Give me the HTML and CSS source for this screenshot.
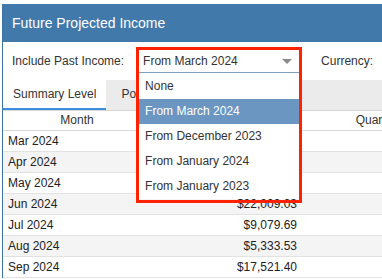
FILE: index.html
```html
<!DOCTYPE html>
<html>
<head>
<meta charset="utf-8">
<link rel="stylesheet" href="styles.css">
</head>
<body>
<div class="panel">
  <div class="panel-header">Future Projected Income</div>
  <div class="filters">
    <span class="label">Include Past Income:</span>
    <div class="picker">
      <div class="select-display">
        <span>From March 2024</span>
        <span class="caret"></span>
      </div>
      <ul class="dropdown">
        <li>None</li>
        <li class="selected">From March 2024</li>
        <li>From December 2023</li>
        <li>From January 2024</li>
        <li>From January 2023</li>
      </ul>
      <div class="annot"></div>
    </div>
    <span class="label currency">Currency:</span>
  </div>
  <div class="tabs">
    <div class="tab active">Summary Level</div>
    <div class="tab">Policy Level</div>
  </div>
  <table class="grid">
    <colgroup><col class="c1"><col class="c2"><col class="c3"></colgroup>
    <thead>
      <tr><th>Month</th><th></th><th>Quarter</th></tr>
    </thead>
    <tbody>
      <tr><td>Mar 2024</td><td class="num"></td><td></td></tr>
      <tr><td>Apr 2024</td><td class="num"></td><td></td></tr>
      <tr><td>May 2024</td><td class="num"></td><td></td></tr>
      <tr><td>Jun 2024</td><td class="num">$22,009.03</td><td></td></tr>
      <tr><td>Jul 2024</td><td class="num">$9,079.69</td><td></td></tr>
      <tr><td>Aug 2024</td><td class="num">$5,333.53</td><td></td></tr>
      <tr><td>Sep 2024</td><td class="num">$17,521.40</td><td></td></tr>
    </tbody>
  </table>
</div>
</body>
</html>
```
FILE: styles.css
```css
html, body {
  margin: 0;
  padding: 0;
  background: #fff;
  overflow: hidden;
}
body {
  padding: 4px 0 0 2px;
  font-family: "Liberation Sans", Arial, sans-serif;
  font-size: 12px;
  color: #333;
  width: 600px;
}
.panel {
  border-left: 1px solid #3f74a6;
}
.panel-header {
  background: #4179ab;
  color: #fff;
  font-size: 14px;
  height: 38px;
  line-height: 38px;
  padding-left: 9px;
}
.filters {
  display: flex;
  align-items: flex-start;
  height: 38px;
  padding: 8px 0 0 9px;
  box-sizing: border-box;
  white-space: nowrap;
}
.label {
  line-height: 22px;
  color: #333;
}
.currency {
  margin-left: 22px;
}
.picker {
  position: relative;
  flex: none;
  width: 160px;
  margin-left: 15px;
}
.select-display {
  display: flex;
  justify-content: space-between;
  align-items: center;
  height: 22px;
  line-height: 22px;
  padding: 0 7px 0 4px;
  border-bottom: 1px solid #7f9fc0;
  color: #333;
}
.caret {
  width: 0;
  height: 0;
  border-left: 5px solid transparent;
  border-right: 5px solid transparent;
  border-top: 5px solid #8a8a8a;
  margin-top: 1px;
}
.dropdown {
  position: absolute;
  top: 24px;
  left: 0;
  width: 160px;
  margin: 0;
  padding: 0;
  list-style: none;
  background: #fff;
  z-index: 5;
}
.dropdown li {
  height: 25px;
  line-height: 25px;
  padding-left: 6px;
  color: #333;
}
.dropdown li.selected {
  background: #6b96c1;
  color: #fff;
}
.annot {
  position: absolute;
  left: -3px;
  top: -3px;
  width: 160px;
  height: 150px;
  border: 3px solid #ff2200;
  z-index: 6;
}
.tabs {
  display: flex;
  gap: 5px;
  background: #ebebeb;
  height: 30px;
  border-bottom: 1px solid #d6d6d6;
  white-space: nowrap;
}
.tab {
  padding: 0 10px;
  line-height: 28px;
  color: #333;
}
.tab.active {
  background: #fff;
  border-bottom: 2px solid #3b8de0;
}
.grid {
  border-collapse: collapse;
  table-layout: fixed;
  width: 448px;
}
.c1 { width: 148px; }
.c2 { width: 150px; }
.c3 { width: 150px; }
.grid th {
  font-weight: normal;
  height: 19px;
  line-height: 19px;
  padding: 0;
  text-align: center;
  border-bottom: 1px solid #dcdcdc;
  color: #333;
  white-space: nowrap;
}
.grid td {
  height: 20px;
  line-height: 20px;
  padding: 0 4px 0 5px;
  border-bottom: 1px solid #e2e2e2;
  color: #222;
  white-space: nowrap;
}
.grid tbody tr:nth-child(even) td {
  background: #f4f4f4;
}
.grid td.num {
  text-align: right;
}
```
